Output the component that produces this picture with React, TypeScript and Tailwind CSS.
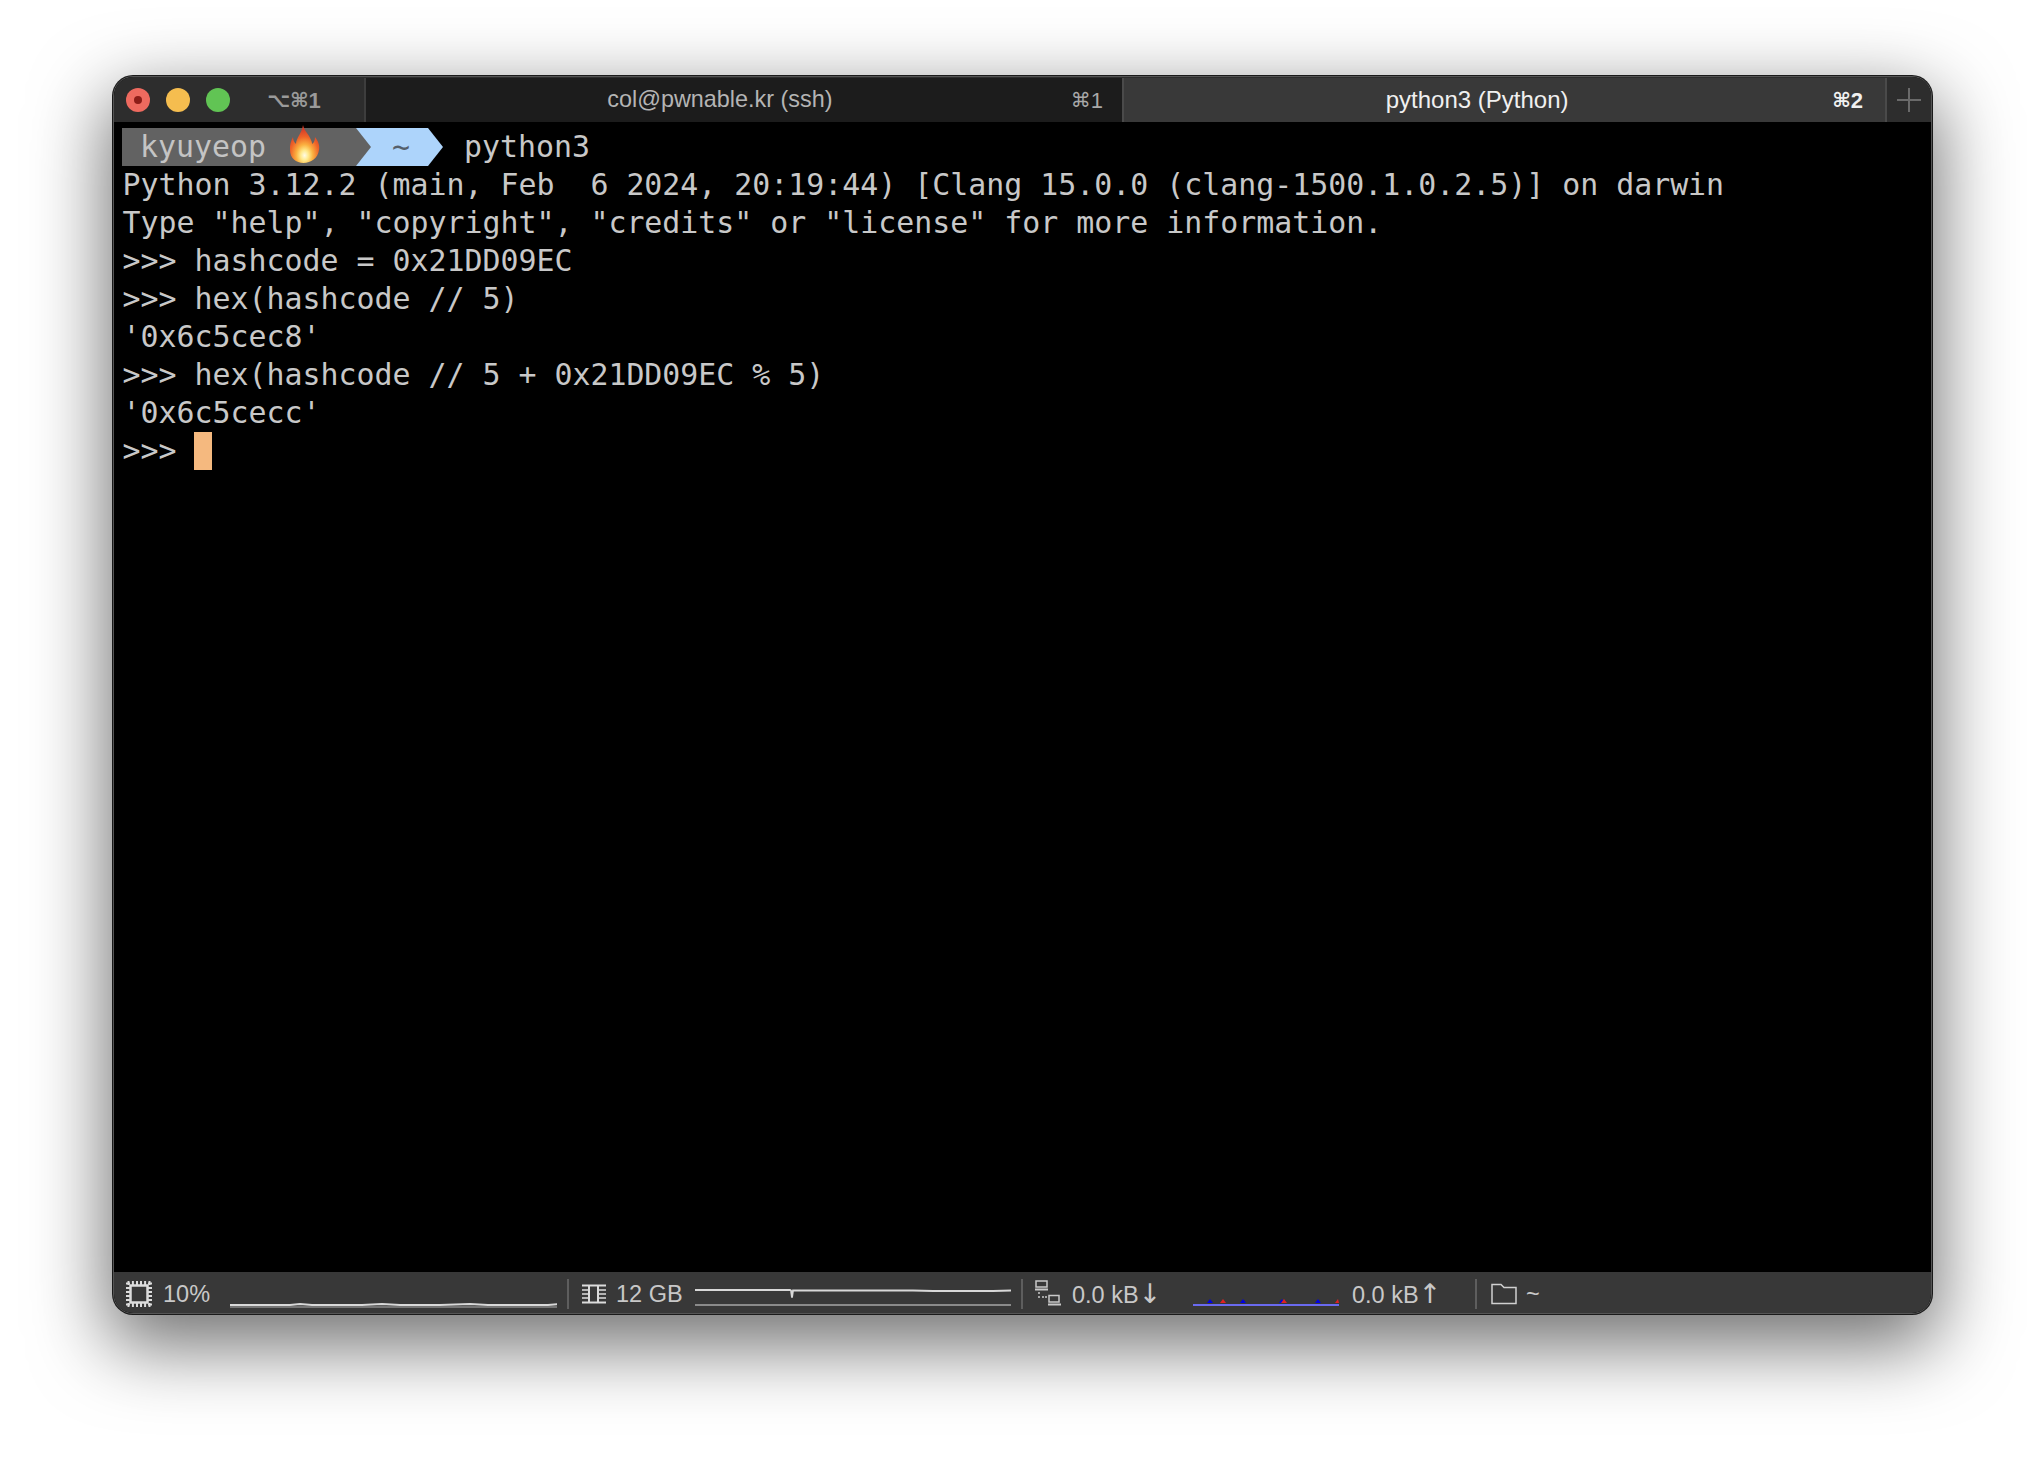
const lines = [
  'Python 3.12.2 (main, Feb  6 2024, 20:19:44) [Clang 15.0.0 (clang-1500.1.0.2.5)] on darwin',
  'Type "help", "copyright", "credits" or "license" for more information.',
  '>>> hashcode = 0x21DD09EC',
  '>>> hex(hashcode // 5)',
  "'0x6c5cec8'",
  '>>> hex(hashcode // 5 + 0x21DD09EC % 5)',
  "'0x6c5cecc'",
]

function Flame() {
  return (
    <svg width="32" height="40" viewBox="0 0 32 40" className="absolute left-[166px] top-[-4px]">
      <defs>
        <radialGradient id="flame" cx="50%" cy="80%" r="68%">
          <stop offset="0%" stopColor="#fffbe6" />
          <stop offset="20%" stopColor="#ffe98a" />
          <stop offset="42%" stopColor="#fbb040" />
          <stop offset="72%" stopColor="#ee6428" />
          <stop offset="100%" stopColor="#d63f2a" />
        </radialGradient>
      </defs>
      <path
        d="M15 1C16 7 21 10 23 16C24 18 24 19 24 20C26 19 27 16 27 13C30 17 32 21 31 26C30 34 23 39 15.5 39C8 39 2 34 2 26C1.5 21 3 17 5 13C5 16 6 18 8 20C8 14 14 9 15 1z"
        fill="url(#flame)"
      />
    </svg>
  )
}

function CpuIcon() {
  return (
    <svg width="26" height="26" viewBox="0 0 26 26" fill="none" stroke="#dcdcdc" className="shrink-0">
      <rect x="4.5" y="4.5" width="17" height="17" strokeWidth="2.5" />
      <path
        d="M0 2.5h4M0 6.9h4M0 11h4M0 15h4M0 19.1h4M0 23.5h4M22 2.5h4M22 6.9h4M22 11h4M22 15h4M22 19.1h4M22 23.5h4M2.5 0v4M6.9 0v4M11 0v4M15 0v4M19.1 0v4M23.5 0v4M2.5 22v4M6.9 22v4M11 22v4M15 22v4M19.1 22v4M23.5 22v4"
        strokeWidth="2"
      />
    </svg>
  )
}

function MemIcon() {
  return (
    <svg width="24" height="20" viewBox="0 0 24 20" fill="none" stroke="#dcdcdc" className="shrink-0">
      <path d="M0 1.5h24M0 18.5h24M7 2v16M16 2v16" strokeWidth="2" />
      <path d="M0 6h7M0 10h7M0 14h7M16 6h8M16 10h8M16 14h8" strokeWidth="1.5" />
    </svg>
  )
}

function NetIcon() {
  return (
    <svg width="26" height="27" viewBox="0 0 26 27" fill="none" stroke="#c8c8c8" className="shrink-0">
      <rect x="1" y="1" width="11" height="6" strokeWidth="1.5" />
      <path d="M0 9.5h13M13 24.5h13" strokeWidth="2" />
      <path d="M3 13h2M3 17h2M7 17h2M10 17h2" strokeWidth="1.5" />
      <rect x="14" y="15.5" width="10" height="6.5" strokeWidth="1.5" />
    </svg>
  )
}

function FolderIcon() {
  return (
    <svg width="26" height="22" viewBox="0 0 26 22" fill="none" stroke="#d0d0d0" strokeWidth="1.5" className="shrink-0">
      <path d="M1 20.5V1.5h9l3 3h12v16z" />
    </svg>
  )
}

function Divider() {
  return <div className="w-[2px] h-[30px] bg-[#5e5e5e] shrink-0" />
}

function Shortcut({ glyphs, digit, className }: { glyphs: string; digit: string; className: string }) {
  return (
    <span className={`flex items-center shrink-0 ${className}`}>
      <span className="text-[20px] font-['DejaVu_Sans',sans-serif]">{glyphs}</span>
      <span className="text-[22px] font-['Liberation_Sans',sans-serif]">{digit}</span>
    </span>
  )
}

export default function App() {
  return (
    <div className="w-[2044px] h-[1462px] bg-white pt-[76px] pl-[113px] overflow-hidden">
      <div className="w-[1819px] h-[1238px] flex flex-col rounded-[20px] overflow-hidden border border-[#555555] shadow-[0_0_0_1px_#1a1a1a,0_26px_75px_6px_rgba(0,0,0,0.56)] font-['Liberation_Sans',sans-serif] bg-black">
        {/* tab bar */}
        <div className="h-[45px] pt-[1px] flex shrink-0 bg-[#2d2d2d]">
          <div className="w-[252px] flex items-center shrink-0 border-r-2 border-[#3d3d3d] pl-[12px]">
            <div className="w-[24px] h-[24px] rounded-full bg-[#ee6a5f] flex items-center justify-center">
              <div className="w-[8px] h-[8px] rounded-full bg-[#8c1d18]" />
            </div>
            <div className="w-[24px] h-[24px] rounded-full bg-[#f5bd4f] ml-[16px]" />
            <div className="w-[24px] h-[24px] rounded-full bg-[#61c454] ml-[16px]" />
            <Shortcut glyphs="⌥⌘" digit="1" className="text-[#9a9a9a] ml-[37px] font-bold" />
          </div>
          <div className="w-[756px] flex items-center shrink-0 bg-[#1c1c1c] text-[#b4b4b4] pr-[19px]">
            <span className="flex-1 text-center text-[23.4px] pl-[3px]">col@pwnable.kr (ssh)</span>
            <Shortcut glyphs="⌘" digit="1" className="text-[#a8a8a8]" />
          </div>
          <div className="w-[763px] flex items-center shrink-0 bg-[#393939] text-[#f0f0f0] border-l-2 border-[#4a4a4a] pr-[22px]">
            <span className="flex-1 text-center text-[24px] pr-[2px]">python3 (Python)</span>
            <Shortcut glyphs="⌘" digit="2" className="font-bold" />
          </div>
          <div className="flex-1 flex items-center justify-center border-l-2 border-[#4a4a4a] bg-[#2d2d2d]">
            <svg width="24" height="24" viewBox="0 0 24 24" stroke="#6a6a6a" strokeWidth="2">
              <path d="M12 0v24M0 12h24" />
            </svg>
          </div>
        </div>

        {/* terminal */}
        <div className="flex-1 bg-black pt-[6px] pl-[8px] font-['DejaVu_Sans_Mono',monospace] text-[29.9px] leading-[38px] text-[#c8c8c8] whitespace-pre">
          <div className="h-[38px] flex">
            <div className="relative w-[234px] h-[38px] bg-[#626262] text-[#c4c4c4]">
              {' kyuyeop'}
              <Flame />
              <svg width="15" height="38" viewBox="0 0 15 38" className="absolute left-[234px] top-0 z-10">
                <path d="M0 0l15 19L0 38z" fill="#626262" />
              </svg>
            </div>
            <div className="w-[87px] h-[38px] bg-[#add4fb] pl-[36px] text-[#55606c] [clip-path:polygon(0_0,72px_0,87px_19px,72px_38px,0_38px)]">~</div>
            <span className="ml-[21px]">python3</span>
          </div>
          {lines.map((line, i) => (
            <div key={i} className="h-[38px] pl-[0.5px]">{line}</div>
          ))}
          <div className="h-[38px] flex pl-[0.5px]">
            <span>{'>>> '}</span>
            <div className="w-[18px] h-[38px] bg-[#f5b97f] -ml-[0.5px]" />
          </div>
        </div>

        {/* status bar */}
        <div className="h-[41px] pt-[2px] shrink-0 bg-[#383838] flex items-center pl-[12px] text-[23.5px] text-[#c8c8c8]">
          <CpuIcon />
          <span className="ml-[11px] w-[46px] pt-[2px]">10%</span>
          <svg width="327" height="12" viewBox="0 0 327 12" className="ml-[21px] mt-[16px] shrink-0" fill="none">
            <path d="M0 9h60l10-1 12 1h50l20-1 18 1h40l30-1 18 1h60l14-1 22 1 14-1 6-3" stroke="#d8d8d8" strokeWidth="2" />
            <path d="M0 11h327" stroke="#8a8a8a" strokeWidth="1.5" />
          </svg>
          <div className="ml-[10px]"><Divider /></div>
          <div className="ml-[13px]"><MemIcon /></div>
          <span className="ml-[10px] w-[64px] whitespace-pre pt-[2px]">12 GB</span>
          <svg width="316" height="20" viewBox="0 0 316 20" className="ml-[15px] mt-[7px] shrink-0" fill="none">
            <path d="M0 3h95l1 0.5 1 7 1-7h120l20 0.5h60l18-0.5" stroke="#d8d8d8" strokeWidth="1.8" />
            <path d="M0 18h316" stroke="#8a8a8a" strokeWidth="2" />
          </svg>
          <div className="ml-[10px]"><Divider /></div>
          <div className="ml-[12px]"><NetIcon /></div>
          <span className="ml-[11px] whitespace-pre w-[90px] pt-[2px] leading-[30px]">
            0.0 kB<span className="text-[27px] leading-none font-['DejaVu_Sans',sans-serif]">↓</span>
          </span>
          <svg width="146" height="10" viewBox="0 0 146 10" className="ml-[31px] mt-[18px] shrink-0">
            <path d="M14 5l3-4 3 4zM47 5l3-4 3 4zM86 5l3-4 3 4zM122 5l3-4 3 4z" fill="#0000e0" />
            <path d="M27 5l3-4 3 4zM88 5l3-4 3 4zM142 5l3-4 1 4z" fill="#e02020" />
            <path d="M0 7h146" stroke="#6a6af0" strokeWidth="2" />
          </svg>
          <span className="ml-[13px] whitespace-pre w-[90px] pt-[2px] leading-[30px]">
            0.0 kB<span className="text-[27px] leading-none font-['DejaVu_Sans',sans-serif]">↑</span>
          </span>
          <div className="ml-[33px]"><Divider /></div>
          <div className="ml-[14px]"><FolderIcon /></div>
          <span className="ml-[9px] pt-[2px]">~</span>
        </div>
      </div>
    </div>
  )
}
